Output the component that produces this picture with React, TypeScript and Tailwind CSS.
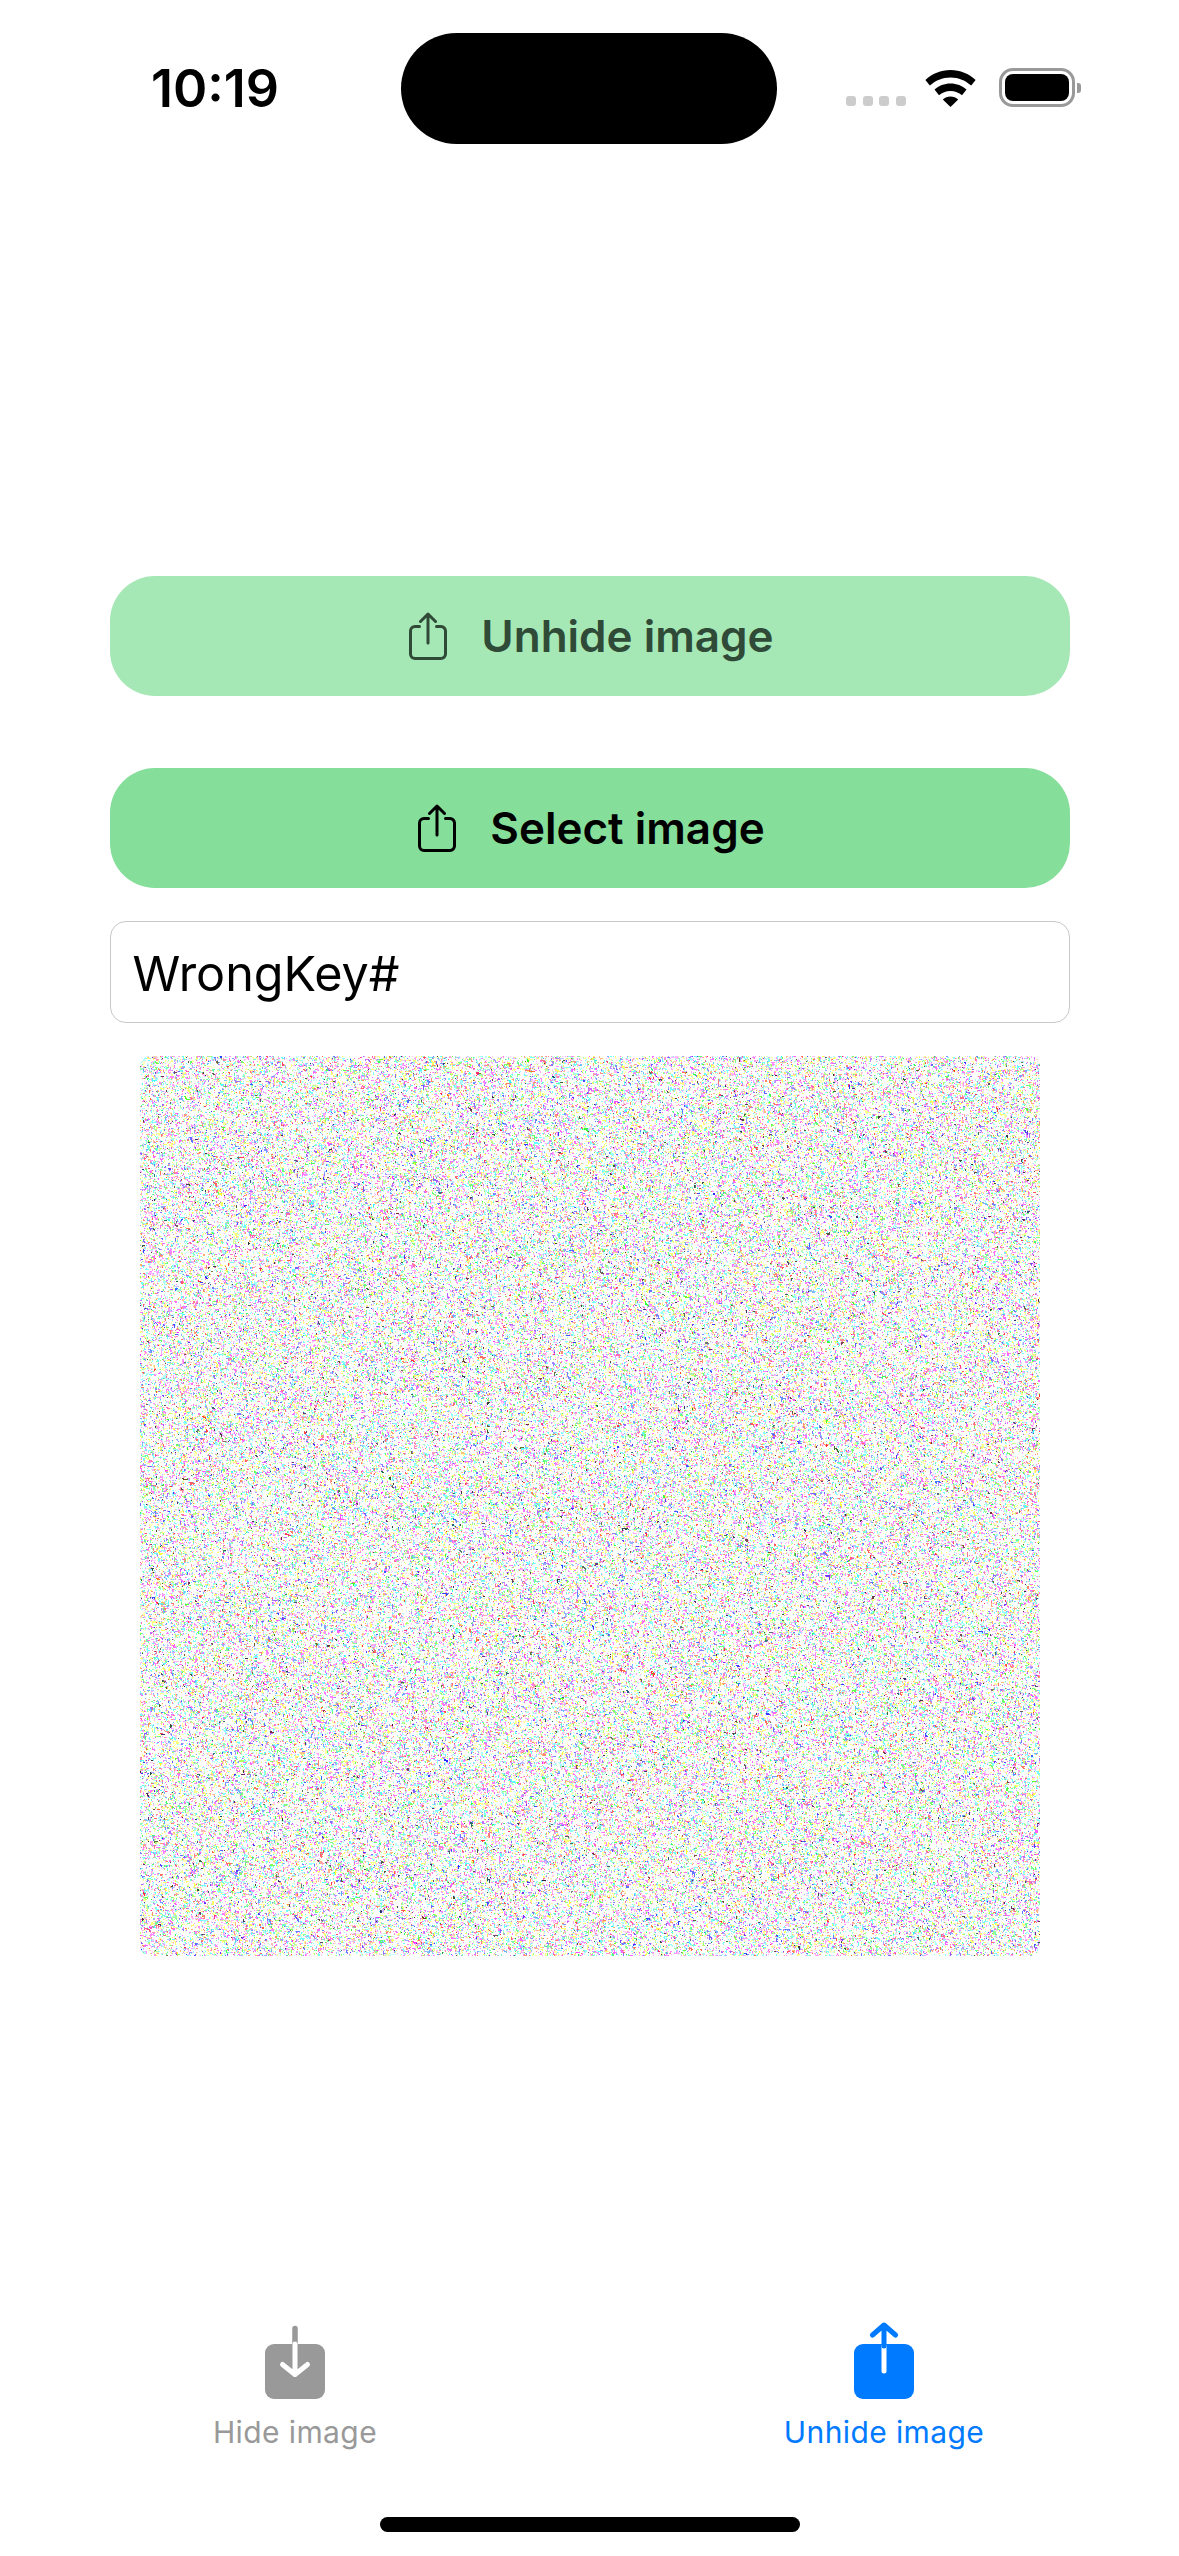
import { useEffect, useRef } from "react"

const sans = "font-['Inter','Liberation_Sans',sans-serif]"

// noise tile, seeded so every run paints the same thing
function NoiseImage() {
  const ref = useRef<HTMLCanvasElement>(null)

  useEffect(() => {
    const ctx = ref.current?.getContext("2d")
    if (!ctx) return
    const size = 900
    const img = ctx.createImageData(size, size)
    let seed = 20240611
    const rand = () => {
      seed = (seed * 1664525 + 1013904223) >>> 0
      return (seed >>> 8) / 16777216
    }
    for (let i = 0; i < img.data.length; i += 4) {
      // some pixels copy a neighbour, which gives the grain its small clumps
      const spread = rand()
      if (i >= 4 && spread < 0.18) {
        img.data[i] = img.data[i - 4]
        img.data[i + 1] = img.data[i - 3]
        img.data[i + 2] = img.data[i - 2]
        img.data[i + 3] = 255
        continue
      }
      if (i >= size * 4 && spread < 0.36) {
        img.data[i] = img.data[i - size * 4]
        img.data[i + 1] = img.data[i - size * 4 + 1]
        img.data[i + 2] = img.data[i - size * 4 + 2]
        img.data[i + 3] = 255
        continue
      }
      const c = rand()
      let r = 255
      let g = 255
      let b = 255
      if (c > 0.6) {
        const dark = c > 0.975
        const low = dark ? 40 : 95
        const span = dark ? 90 : 110
        const pick = Math.floor(rand() * 3)
        r = pick === 0 || (dark && rand() > 0.5) ? low + Math.floor(rand() * span) : 255
        g = pick === 1 || (dark && rand() > 0.5) ? low + Math.floor(rand() * span) : 255
        b = pick === 2 || (dark && rand() > 0.5) ? low + Math.floor(rand() * span) : 255
        if (!dark && rand() > 0.65) {
          // two channels down for the stronger hues
          const second = (pick + 1) % 3
          const v = low + Math.floor(rand() * span)
          if (second === 0) r = v
          if (second === 1) g = v
          if (second === 2) b = v
        }
      }
      img.data[i] = r
      img.data[i + 1] = g
      img.data[i + 2] = b
      img.data[i + 3] = 255
    }
    ctx.putImageData(img, 0, 0)
  }, [])

  return <canvas ref={ref} width={900} height={900} className="block w-[900px] h-[900px] rounded-[10px]" />
}

function ShareIcon({ color }: { color: string }) {
  return (
    <svg width="38" height="48" viewBox="0 0 38 48" fill="none" stroke={color} strokeWidth="3" strokeLinecap="round" strokeLinejoin="round">
      <path d="M10.500 14.500H6a4.500 4.500 0 0 0-4.500 4.500v23A4.500 4.500 0 0 0 6 46.500h26a4.500 4.500 0 0 0 4.500-4.500V19a4.500 4.500 0 0 0-4.500-4.500h-4.500" />
      <path d="M19 31V2M11.500 9.500 19 2l7.500 7.500" />
    </svg>
  )
}

function WifiIcon() {
  return (
    <svg width="51" height="37" viewBox="0 0 51 37" fill="#000">
      <path d="M25.500 0C15.800 0 7 3.800.4 10l4.400 5.600C10.200 10.500 17.500 7.400 25.500 7.400S40.800 10.500 46.200 15.600L50.600 10C44 3.800 35.200 0 25.500 0Z" />
      <path d="M25.500 13.500c-6.200 0-11.800 2.300-16 6.100l4.500 5.700c3-2.700 7-4.300 11.500-4.300s8.500 1.600 11.500 4.300l4.500-5.700c-4.200-3.800-9.800-6.100-16-6.100Z" />
      <path d="M25.500 26.500c-3 0-5.700 1.100-7.700 3l7.700 7.500 7.700-7.500c-2-1.900-4.700-3-7.700-3Z" />
    </svg>
  )
}

function StatusBar() {
  return (
    <div className="flex h-[144px] shrink-0 pt-[33px] pl-[151px]">
      <div className={`${sans} w-[250px] pt-[26px] text-[52px] leading-[60px] font-semibold text-black`}>10:19</div>
      <div className="w-[376px] h-[111px] rounded-[56px] bg-black" />
      <div className="flex items-end h-[74px] ml-[69px]">
        <div className="flex gap-[6.500px] mb-[1px]">
          <span className="w-[10px] h-[10px] rounded-[3px] bg-[#cccccc]" />
          <span className="w-[10px] h-[10px] rounded-[3px] bg-[#cccccc]" />
          <span className="w-[10px] h-[10px] rounded-[3px] bg-[#cccccc]" />
          <span className="w-[10px] h-[10px] rounded-[3px] bg-[#cccccc]" />
        </div>
        <div className="ml-[19px]">
          <WifiIcon />
        </div>
        <div className="flex items-center ml-[23px]">
          <div className="w-[76px] h-[39px] rounded-[14px] border-[3px] border-[#999999] p-[3px]">
            <div className="w-full h-full rounded-[8px] bg-black" />
          </div>
          <div className="w-[4px] h-[10px] ml-[2px] rounded-r-[3px] bg-[#999999]" />
        </div>
      </div>
    </div>
  )
}

function ActionButton({ label, bg, color }: { label: string; bg: string; color: string }) {
  return (
    <button className={`flex h-[120px] w-[960px] items-center justify-center gap-[34px] rounded-[45px] pl-[4px] ${bg}`}>
      <ShareIcon color={color} />
      <span className={`${sans} text-[44px] font-semibold`} style={{ color }}>{label}</span>
    </button>
  )
}

function TabBar() {
  return (
    <div className="flex justify-between pl-[212px] pr-[193px]">
      <div className="flex w-[166px] flex-col items-center">
        <svg width="60" height="78" viewBox="0 0 60 78" fill="none">
          <rect x="0" y="22" width="60" height="55" rx="9" fill="#999999" />
          <path d="M30 6.500V22" stroke="#999999" strokeWidth="5.500" strokeLinecap="round" />
          <path d="M30 22v30.500M17.500 42.500l12.500 10 12.500-10" stroke="#ffffff" strokeWidth="5" strokeLinecap="round" strokeLinejoin="round" />
        </svg>
        <span className={`${sans} mt-[12px] text-[30px] leading-[40px] font-normal tracking-[0.4px] whitespace-nowrap text-[#999999]`}>Hide image</span>
      </div>
      <div className="flex w-[204px] flex-col items-center">
        <svg width="62" height="78" viewBox="0 0 62 78" fill="none">
          <rect x="1" y="22" width="60" height="55" rx="9" fill="#007aff" />
          <path d="M31 24v25" stroke="#ffffff" strokeWidth="5" strokeLinecap="round" />
          <path d="M31 24V3M19.500 13 31 3l11.500 10" stroke="#007aff" strokeWidth="5" strokeLinecap="round" strokeLinejoin="round" />
        </svg>
        <span className={`${sans} mt-[12px] text-[30px] leading-[40px] font-normal tracking-[0.4px] whitespace-nowrap text-[#007aff]`}>Unhide image</span>
      </div>
    </div>
  )
}

export default function App() {
  return (
    <div className="flex flex-col w-[1179px] h-[2556px] bg-white overflow-hidden">
      <StatusBar />

      <div className="flex flex-col items-center pt-[432px]">
        <ActionButton label="Unhide image" bg="bg-[#a5e8b6]" color="#2f4a36" />
        <div className="mt-[72px]">
          <ActionButton label="Select image" bg="bg-[#86de9b]" color="#000000" />
        </div>

        {/* key field */}
        <div className="flex items-center mt-[33px] h-[102px] w-[960px] rounded-[16px] border border-[#c8c8c8] px-[22px] pt-[4px]">
          <span className={`${sans} text-[48.500px] text-black`}>WrongKey#</span>
        </div>

        <div className="mt-[33px]">
          <NoiseImage />
        </div>
      </div>

      <div className="mt-[366px]">
        <TabBar />
      </div>

      <div className="mt-auto mb-[24px] mx-auto w-[420px] h-[15px] rounded-full bg-black" />
    </div>
  )
}
